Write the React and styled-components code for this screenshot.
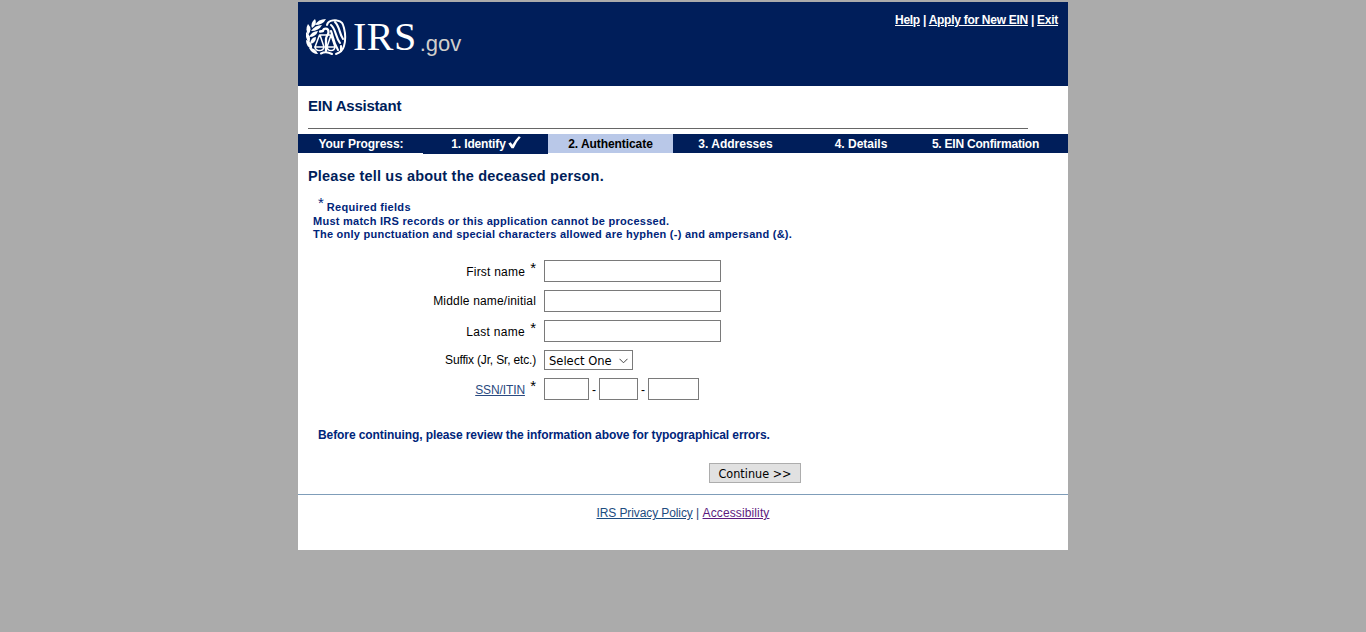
import React from "react";
import styled, { createGlobalStyle } from "styled-components";

const navy = "#001e5a";

const GlobalStyle = createGlobalStyle`
  * { box-sizing: border-box; }
  body {
    margin: 0;
    background: #ababab;
    font: 12px/14px "Liberation Sans", Arial, sans-serif;
    color: #000;
  }
`;

const Page = styled.div`
  width: 770px;
  height: 550px;
  margin: 0 auto;
  padding-top: 2px;
  background: #fff;
  background-clip: content-box;
  white-space: nowrap;
`;

const Header = styled.header`
  display: flex;
  justify-content: space-between;
  height: 84px;
  padding: 11px 10px 0 8px;
  background: ${navy};
  color: #fff;
`;

const Brand = styled.div`
  display: flex;
  padding-top: 5px;
`;

const BrandName = styled.span`
  margin: -1px 0 0 5px;
  font: 40px/40px "Liberation Serif", "Times New Roman", serif;
  letter-spacing: 0.5px;
`;

const BrandSuffix = styled.span`
  margin: 14px 0 0 3px;
  font-size: 22px;
  line-height: 24px;
  color: #d0cecb;
`;

const HeaderLinks = styled.nav`
  font-weight: bold;
  letter-spacing: -0.28px;
  a { color: #fff; text-underline-offset: 1px; }
`;

const Title = styled.h1`
  margin: 11px 0 0 10px;
  font-size: 15px;
  line-height: 17px;
  letter-spacing: -0.23px;
  color: ${navy};
`;

const Rule = styled.hr`
  width: 720px;
  height: 1px;
  margin: 14px 0 5px 10px;
  border: 0;
  background: #666;
`;

const Progress = styled.ol`
  display: flex;
  align-items: flex-start;
  height: 19px;
  margin: 0;
  padding: 0 20px 0 0;
  list-style: none;
  background: ${navy};
`;

const Step = styled.li`
  display: flex;
  justify-content: center;
  width: 125px;
  height: ${(p) => (p.$done ? 20 : 19)}px;
  padding: 3px 0 0 ${(p) => p.$shift || 0}px;
  font-weight: bold;
  letter-spacing: ${(p) => p.$spacing || 0}px;
  background: ${(p) => (p.$current ? "#b9c8e8" : navy)};
  color: ${(p) => (p.$current ? "#000" : "#fff")};
`;

const CheckIcon = styled.svg`
  width: 13px;
  height: 13px;
  margin: -1px 0 0 2px;
`;

const Heading = styled.h2`
  margin: 15px 0 0 10px;
  font-size: 14.5px;
  line-height: 16px;
  letter-spacing: 0.2px;
  color: ${navy};
`;

const Notes = styled.div`
  margin: 15px 0 0 15px;
  font-size: 11px;
  font-weight: bold;
  line-height: 13px;
  color: #00257a;
`;

const Note = styled.p`
  margin: 0;
  padding-left: ${(p) => p.$indent || 0}px;
  height: ${(p) => p.$height || 13}px;
  line-height: ${(p) => p.$height || 13}px;
  letter-spacing: ${(p) => p.$spacing || 0}px;
`;

const Star = styled.span`
  position: relative;
  top: -3px;
  margin: 0 ${(p) => p.$after || 0}px 0 ${(p) => p.$before || 0}px;
  font-size: 15px;
  font-weight: normal;
  line-height: 0;
  letter-spacing: 0;
`;

const Form = styled.form`
  margin: 19px 0 0;
`;

const Row = styled.div`
  display: grid;
  grid-template-columns: 238px auto;
  column-gap: 8px;
  height: ${(p) => p.$height || 30}px;
`;

const Label = styled.label`
  padding-top: ${(p) => p.$top}px;
  text-align: right;
  letter-spacing: ${(p) => p.$spacing || 0}px;
`;

const LabelLink = styled.a`
  color: #2a4a80;
  text-underline-offset: 1px;
`;

const Fields = styled.div`
  display: flex;
  align-items: flex-start;
`;

const Input = styled.input`
  width: ${(p) => p.$width}px;
  height: 22px;
  padding: 0 3px;
  border: 1px solid #7a7a7a;
  border-radius: 0;
  background: #fff;
`;

const Dash = styled.span`
  width: ${(p) => p.$width}px;
  padding-top: 5px;
  text-align: center;
`;

const Select = styled.button`
  display: flex;
  justify-content: space-between;
  align-items: center;
  width: 89px;
  height: 20px;
  padding: 1px 4px 0;
  border: 1px solid #7a7a7a;
  background: #fff;
  color: #000;
  font: 12.8px/17px "DejaVu Sans Condensed", Tahoma, sans-serif;
`;

const Review = styled.p`
  margin: 20px 0 0 20px;
  font-weight: bold;
  letter-spacing: -0.088px;
  color: #00257a;
`;

const Continue = styled.button`
  display: block;
  width: 92px;
  height: 20px;
  margin: 21px 0 0 411px;
  padding: 2px 0 0;
  border: 1px solid #adadad;
  background: #e1e1e1;
  color: #000;
  font: 12.5px/16px "DejaVu Sans Condensed", Tahoma, sans-serif;
`;

const Footer = styled.footer`
  margin-top: 11px;
  padding-top: 11px;
  border-top: 1px solid #7f9db9;
  text-align: center;
  color: #1f3f74;
`;

const FooterLink = styled.a`
  color: ${(p) => (p.$visited ? "#5d1a80" : "#1d4c80")};
  letter-spacing: ${(p) => p.$spacing}px;
  text-underline-offset: 1px;
`;

function Eagle() {
  return (
    <svg width="42" height="38" viewBox="0 0 42 38" fill="none" stroke="#fff" strokeWidth="2" strokeLinecap="round" strokeLinejoin="round">
      <g fill="#fff" stroke="none">
        <path d="M9 7Q12 1 20 1Q17 7 9 7Z" />
        <path d="M6 10Q4 5 9 1Q12 6 6 10Z" />
        <path d="M5 13Q9 7 16 7Q13 13 5 13Z" />
        <path d="M2 17Q-1 11 2 6Q7 11 2 17Z" />
        <path d="M3 19Q6 13 12 13Q10 19 3 19Z" />
        <path d="M3 25Q-1 20 0 14Q6 18 3 25Z" />
        <path d="M4 26Q5 19 10 19Q10 25 4 26Z" />
        <path d="M6 31Q0 29 0 22Q7 24 6 31Z" />
        <path d="M12 36Q6 36 3 30Q9 29 12 36Z" />
      </g>
      <path d="M14 13.500L17 13C17 10 22.500 9.500 22.500 14C22.500 17 20 18 20 21V33" strokeWidth="2.300" />
      <path d="M21 7C22 3 27 2 31 2.500C36 3 37 6 38 10C39.500 16 39.500 23 38 28C37 32 33 35 30 36" />
      <path d="M25 7C30 11 29 18 34 25M29 4C34 9 33 15 37 21M25 13C27 18 27 24 32 32M35 28V33" strokeWidth="2.100" />
      <path d="M13.500 17L9 29H18L14 17H25L21 29H29L25 17" strokeWidth="1.500" />
      <path d="M9 29Q9.500 32.500 13.500 32.500Q17.500 32.500 18 29M21 29Q21.500 32.500 25 32.500Q28.500 32.500 29 29" strokeWidth="1.600" />
      <path d="M15 35.500Q20 33 26 36" />
    </svg>
  );
}

const Check = () => (
  <CheckIcon viewBox="0 0 13 13">
    <path d="M0.300 7.500L2.700 6.200L4.500 8.800Q7 4 10.800 0.300L12.800 1.200Q8.500 5.500 5.700 12.200H3.500Z" fill="#fff" />
  </CheckIcon>
);

const steps = [
  { text: "Your Progress:", shift: 1, spacing: -0.05 },
  { text: "1. Identify", done: true, spacing: -0.15, shift: 1 },
  { text: "2. Authenticate", current: true, spacing: -0.07 },
  { text: "3. Addresses" },
  { text: "4. Details", shift: 1 },
  { text: "5. EIN Confirmation", spacing: -0.22 },
];

export default function App() {
  return (
    <>
      <GlobalStyle />
      <Page>
        <Header>
          <Brand>
            <Eagle />
            <BrandName>IRS</BrandName>
            <BrandSuffix>.gov</BrandSuffix>
          </Brand>
          <HeaderLinks>
            <a href="#help">Help</a> | <a href="#apply">Apply for New EIN</a> | <a href="#exit">Exit</a>
          </HeaderLinks>
        </Header>
        <Title>EIN Assistant</Title>
        <Rule />
        <Progress>
          {steps.map((s) => (
            <Step key={s.text} $done={s.done} $current={s.current} $shift={s.shift} $spacing={s.spacing}>
              {s.text}
              {s.done && <Check />}
            </Step>
          ))}
        </Progress>
        <Heading>Please tell us about the deceased person.</Heading>
        <Notes>
          <Note $indent={5} $height={16} $spacing={0.3}><Star $after={3}>*</Star>Required fields</Note>
          <Note $spacing={0.26}>Must match IRS records or this application cannot be processed.</Note>
          <Note $spacing={0.25}>The only punctuation and special characters allowed are hyphen (-) and ampersand (&amp;).</Note>
        </Notes>
        <Form onSubmit={(e) => e.preventDefault()}>
          <Row>
            <Label $top={5} $spacing={0.22} htmlFor="first">First name <Star $before={1.5}>*</Star></Label>
            <Fields><Input id="first" $width={177} /></Fields>
          </Row>
          <Row>
            <Label $top={4} $spacing={0.18} htmlFor="middle">Middle name/initial</Label>
            <Fields><Input id="middle" $width={177} /></Fields>
          </Row>
          <Row>
            <Label $top={5} $spacing={0.3} htmlFor="last">Last name <Star $before={1.5}>*</Star></Label>
            <Fields><Input id="last" $width={177} /></Fields>
          </Row>
          <Row $height={28}>
            <Label $top={3} $spacing={-0.17}>Suffix (Jr, Sr, etc.)</Label>
            <Fields>
              <Select type="button">
                Select One
                <svg width="9" height="6" viewBox="0 0 9 6" fill="none" stroke="#444"><path d="M0.500 0.800L4.500 4.800L8.500 0.800" /></svg>
              </Select>
            </Fields>
          </Row>
          <Row>
            <Label $top={5} $spacing={-0.12}><LabelLink href="#ssn">SSN/ITIN</LabelLink> <Star $before={2}>*</Star></Label>
            <Fields>
              <Input $width={45} /><Dash $width={10}>-</Dash>
              <Input $width={39} /><Dash $width={10}>-</Dash>
              <Input $width={51} />
            </Fields>
          </Row>
          <Review>Before continuing, please review the information above for typographical errors.</Review>
          <Continue>Continue &gt;&gt;</Continue>
        </Form>
        <Footer>
          <FooterLink href="#privacy" $spacing={-0.1}>IRS Privacy Policy</FooterLink> | <FooterLink href="#accessibility" $visited $spacing={0.12}>Accessibility</FooterLink>
        </Footer>
      </Page>
    </>
  );
}
